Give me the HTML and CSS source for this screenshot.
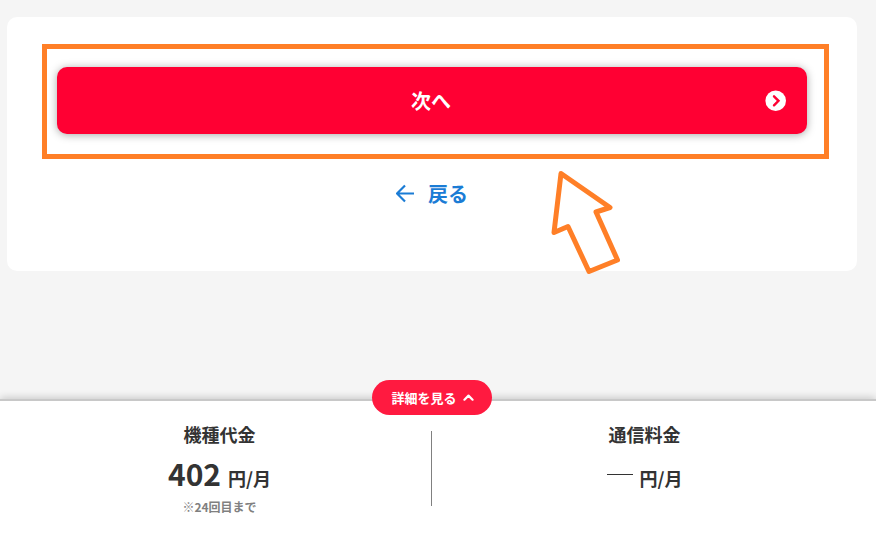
FILE: index.html
```html
<!DOCTYPE html>
<html lang="ja">
<head>
    <meta charset="UTF-8">
    <meta name="viewport" content="width=device-width, initial-scale=1.0">
    <title>お申し込み</title>
    <link rel="stylesheet" href="styles.css">
</head>
<body>
    <main class="card">
        <div class="next-area">
            <button type="button" class="next-btn">
                <span class="next-label">次へ</span>
                <svg class="next-icon" viewBox="0 0 22 22" aria-hidden="true">
                    <circle cx="10.7" cy="10.7" r="10.3" fill="#fff"/>
                    <path d="M9 6.3l4.5 4.5L9 15.3" fill="none" stroke="#ff0033" stroke-width="2.4" stroke-linecap="round" stroke-linejoin="miter"/>
                </svg>
            </button>
            <div class="highlight"></div>
            <svg class="pointer" viewBox="0 0 72 106" aria-hidden="true">
                <path d="M11 4.5L60 38.5L46 43L67.5 91L39 102.5L18 57.5L4 63.5Z" fill="none" stroke="#ff7f27" stroke-width="5" stroke-linejoin="round"/>
            </svg>
        </div>
        <a href="#" class="back-link">
            <svg class="back-icon" viewBox="0 0 20 20" aria-hidden="true">
                <path d="M18 9.5H1.5M9 1.5l-8 8 8 8" fill="none" stroke="#1b7cd5" stroke-width="2.2"/>
            </svg>
            <span>戻る</span>
        </a>
    </main>

    <footer class="summary">
        <button type="button" class="detail-btn">
            詳細を見る
            <svg class="detail-icon" viewBox="0 0 10 10" aria-hidden="true">
                <path d="M1.3 7L5 3.3L8.7 7" fill="none" stroke="#fff" stroke-width="2" stroke-linecap="round" stroke-linejoin="round"/>
            </svg>
        </button>
        <div class="prices">
            <section class="price">
                <h2>機種代金</h2>
                <p class="amount">402<span class="unit">円/月</span></p>
                <p class="note">※24回目まで</p>
            </section>
            <section class="price">
                <h2>通信料金</h2>
                <p class="amount"><span class="no-value"></span><span class="unit">円/月</span></p>
            </section>
        </div>
    </footer>
</body>
</html>
```

FILE: styles.css
```css
* {
    box-sizing: border-box;
}
body {
    display: flex;
    flex-direction: column;
    min-height: 100vh;
    margin: 0;
    background: #f5f5f5;
    color: #333;
    font-family: "Noto Sans CJK JP", sans-serif;
    font-weight: bold;
}
button {
    border: none;
    color: #fff;
    font-family: inherit;
    font-weight: bold;
    cursor: pointer;
}
svg {
    display: block;
}

/* カード */
.card {
    display: flex;
    flex-direction: column;
    align-items: center;
    margin: 17px 19px 40px 7px;
    padding: 50px 50px 62px;
    background: #fff;
    border-radius: 10px;
}
.next-area {
    position: relative;
    width: 100%;
}
.next-btn {
    display: flex;
    align-items: center;
    width: 100%;
    padding: 19px 20px 18px;
    background: #ff0033;
    border-radius: 10px;
    box-shadow: 0 1px 8px rgba(0, 0, 0, 0.35);
    font-size: 20px;
    line-height: 30px;
}
.next-label {
    flex: 1;
    padding-left: 20px;
}
.next-icon {
    width: 22px;
    height: 22px;
}
.highlight {
    position: absolute;
    top: -23px;
    right: -22px;
    bottom: -25px;
    left: -15px;
    border: 5px solid #ff7f27;
    pointer-events: none;
}
.pointer {
    position: absolute;
    top: 102px;
    left: calc(50% + 118px);
    width: 72px;
    height: 106px;
    pointer-events: none;
}
.back-link {
    display: flex;
    align-items: center;
    gap: 12px;
    margin-top: 45px;
    color: #1b7cd5;
    font-size: 20px;
    line-height: 30px;
    text-decoration: none;
}
.back-icon {
    width: 20px;
    height: 20px;
}

/* 料金 */
.summary {
    display: flex;
    flex-direction: column;
    align-items: center;
    margin-top: auto;
    padding: 0 19px 17px 7px;
    background: #fff;
    border-top: 2px solid #c8c8c8;
    box-shadow: 0 -1px 8px rgba(0, 0, 0, 0.2);
}
.detail-btn {
    display: flex;
    align-items: center;
    gap: 6px;
    margin-top: -21px;
    padding: 0 18px 0 19px;
    background: #ff1a40;
    border-radius: 18px;
    font-size: 13px;
    line-height: 35px;
}
.detail-icon {
    width: 11px;
    height: 11px;
}
.prices {
    display: grid;
    grid-template-columns: 1fr 1fr;
    width: 100%;
    margin-top: 5px;
}
.price {
    position: relative;
    text-align: center;
}
.price + .price::before {
    content: "";
    position: absolute;
    top: 11px;
    bottom: 10px;
    left: -1px;
    width: 1px;
    background: #808080;
}
.price h2,
.price p {
    margin: 0;
}
.price h2 {
    font-size: 18px;
    line-height: 28px;
}
.price .amount {
    font-size: 30px;
    line-height: 50px;
}
.unit {
    margin-left: 7px;
    font-size: 18px;
    line-height: 1;
}
.no-value {
    display: inline-block;
    width: 26px;
    height: 1px;
    background: #333;
    vertical-align: 11px;
}
.price .note {
    color: #808080;
    font-size: 12px;
    line-height: 18px;
}
```
